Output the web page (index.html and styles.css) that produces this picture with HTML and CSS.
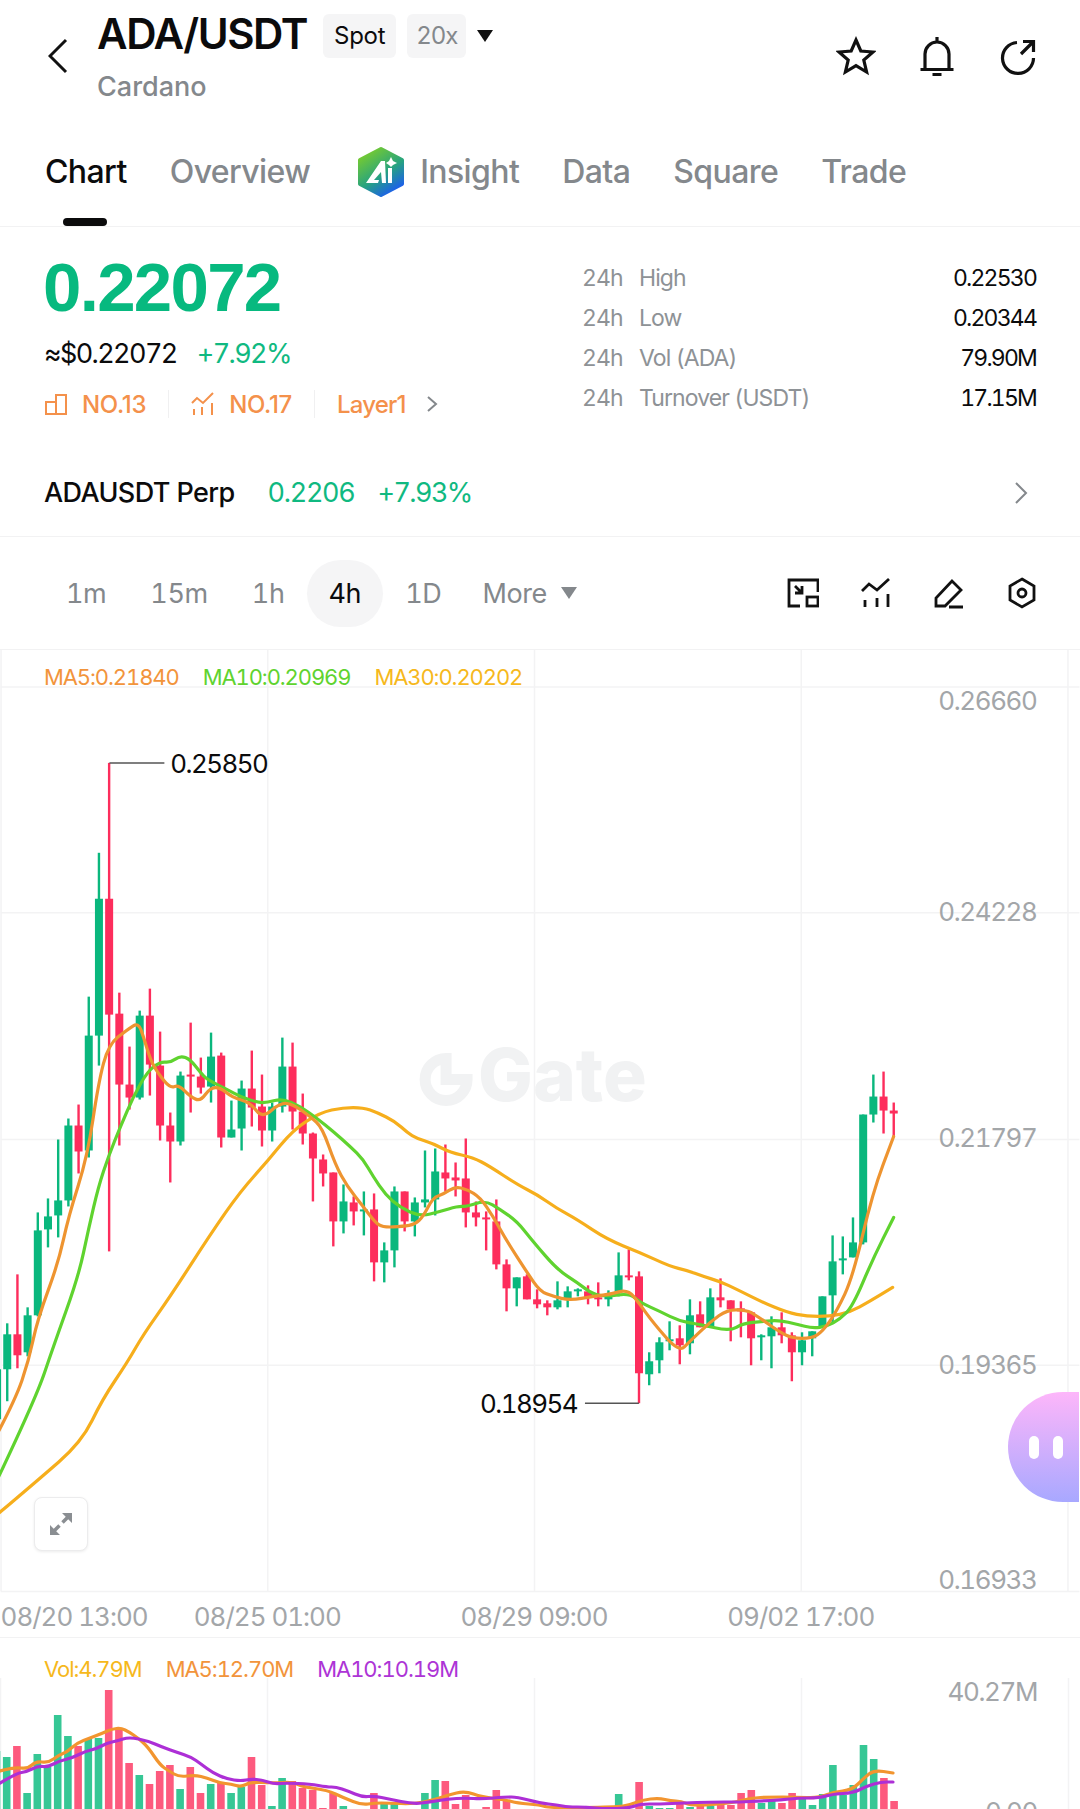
FILE: index.html
```html
<!DOCTYPE html>
<html>
	<head>
		<meta charset="UTF-8">
		<title>ADA/USDT</title>
		<link rel="stylesheet" href="styles.css">
	</head>
	<body>
		<div class="header">
			<svg class="back" viewBox="0 0 20 36"><path d="M18 2 L2 18 L18 34"/></svg>
			<div class="title-box">
				<div class="title-row">
					<h1 class="title">ADA/USDT</h1>
					<span class="badge">Spot</span>
					<span class="badge badge-gray">20x</span>
					<span class="tri"></span>
				</div>
				<div class="coin">Cardano</div>
			</div>
			<div class="head-icons">
				<svg class="icon" viewBox="0 0 40 40"><polygon points="20,4 24.8,15 37,16 27.8,24 30.6,36 20,29.6 9.4,36 12.2,24 3,16 15.2,15"/></svg>
				<svg class="icon" viewBox="0 0 40 40"><path d="M20 1 V5 M8 33 V18 A12 12 0 0 1 32 18 V33 M3.5 33.5 H36.5 M15.5 38.5 H24.5"/></svg>
				<svg class="icon" viewBox="0 0 40 40"><path d="M19 6.5 A15.5 15.5 0 1 0 35.5 22 M23 18 L34 7 M25 5.5 H35.5 V16"/></svg>
			</div>
		</div>

		<div class="tabs">
			<div class="tab active">Chart</div>
			<div class="tab">Overview</div>
			<div class="tab tab-ai">
				<svg class="ai-logo" viewBox="0 0 48 52">
					<defs>
						<linearGradient id="aiGrad" x1="0.15" y1="0.1" x2="0.7" y2="1">
							<stop offset="0" stop-color="#72c934"/>
							<stop offset="0.55" stop-color="#27a37f"/>
							<stop offset="1" stop-color="#1c5fec"/>
						</linearGradient>
					</defs>
					<polygon points="24,3 45,14 45,38 24,49 3,38 3,14" fill="url(#aiGrad)" stroke="url(#aiGrad)" stroke-width="4" stroke-linejoin="round"/>
					<polygon points="9,37 24,15 28,15 29,37 25,37 24,26 17,34 22,34 21,37" fill="#fff"/>
					<rect x="31" y="22" width="4" height="15" fill="#fff"/>
					<polygon points="34,11 36,15 40,17 36,19 34,21 32,19 29,17 32,15" fill="#fff"/>
				</svg>
				Insight
			</div>
			<div class="tab">Data</div>
			<div class="tab">Square</div>
			<div class="tab">Trade</div>
		</div>

		<div class="summary">
			<div class="quote">
				<div class="quote-left">
					<div class="price">0.22072</div>
					<div class="sub-row">
						<span>≈$0.22072</span>
						<span class="green">+7.92%</span>
					</div>
					<div class="tags">
						<svg class="tag-icon" viewBox="0 0 24 24"><path d="M2 10 H12 V22 H2 Z M12 3 H22 V22 H12 Z"/></svg>
						<span class="tag-text">NO.13</span>
						<span class="tag-line"></span>
						<svg class="tag-icon" viewBox="0 0 24 24"><path d="M1 11 L6 6 L12 11 L22 1 M3 17 V23 M11 15 V23 M21 11 V23"/></svg>
						<span class="tag-text">NO.17</span>
						<span class="tag-line"></span>
						<span class="tag-text tag-layer">Layer1</span>
						<svg class="tag-arrow" viewBox="0 0 12 18"><path d="M2 2 L10 9 L2 16"/></svg>
					</div>
				</div>
				<div class="stats">
					<div class="stat"><span class="stat-h">24h</span><span class="stat-name">High</span><span class="stat-val">0.22530</span></div>
					<div class="stat"><span class="stat-h">24h</span><span class="stat-name">Low</span><span class="stat-val">0.20344</span></div>
					<div class="stat"><span class="stat-h">24h</span><span class="stat-name">Vol (ADA)</span><span class="stat-val">79.90M</span></div>
					<div class="stat"><span class="stat-h">24h</span><span class="stat-name">Turnover (USDT)</span><span class="stat-val">17.15M</span></div>
				</div>
			</div>
			<div class="perp">
				<span class="perp-name">ADAUSDT Perp</span>
				<span class="green">0.2206</span>
				<span class="green perp-pct">+7.93%</span>
				<svg class="perp-arrow" viewBox="0 0 14 24"><path d="M2 2 L12 12 L2 22"/></svg>
			</div>
		</div>

		<div class="toolbar">
			<div class="times">
				<span class="time">1m</span>
				<span class="time">15m</span>
				<span class="time">1h</span>
				<span class="time on">4h</span>
				<span class="time">1D</span>
				<span class="time time-more">More</span>
				<span class="tri tri-gray"></span>
			</div>
			<div class="tools">
				<svg class="tool" viewBox="0 0 32 32"><path d="M13 29 H2 V3 H31 V15 M8 9 L15 16 M8 16 H15 V9"/><rect x="20" y="20" width="11" height="9"/></svg>
				<svg class="tool" viewBox="0 0 32 32"><path d="M2 14 L9 7 L17 13 L29 2 M5 23 V30 M17 21 V30 M28 17 V30"/></svg>
				<svg class="tool" viewBox="0 0 32 32"><path d="M3 29 V21 L19 4 L28 13 L12 29 Z M16 30 H30"/></svg>
				<svg class="tool" viewBox="0 0 32 32"><polygon points="16,2 28,9 28,23 16,30 4,23 4,9"/><circle cx="16" cy="16" r="4"/></svg>
			</div>
		</div>

		<div class="chart">
			<svg class="plot" viewBox="0 650 1080 988">
				<g id="grid"></g>
				<g class="mark">
					<path class="mark-ring" d="M446 1059 A21 21 0 1 0 467 1080 H446 Z"/>
					<text class="mark-text" x="478" y="1101">Gate</text>
				</g>
				<g id="candles"></g>
				<g id="lines"></g>
				<path class="tick" d="M109 763 H164"/>
				<path class="tick" d="M639 1404 H585"/>
				<text class="hl" x="170" y="773">0.25850</text>
				<text class="hl" x="480" y="1414">0.18954</text>
				<text class="axis" x="1037" y="710">0.26660</text>
				<text class="axis" x="1037" y="921">0.24228</text>
				<text class="axis" x="1037" y="1148">0.21797</text>
				<text class="axis" x="1037" y="1375">0.19365</text>
				<text class="axis" x="1037" y="1590">0.16933</text>
				<text class="date" x="0" y="1627">08/20 13:00</text>
				<text class="date mid" x="267" y="1627">08/25 01:00</text>
				<text class="date mid" x="534" y="1627">08/29 09:00</text>
				<text class="date mid" x="801" y="1627">09/02 17:00</text>
			</svg>
			<div class="legend">
				<span class="c-ma5">MA5:0.21840</span>
				<span class="c-ma10">MA10:0.20969</span>
				<span class="c-ma30">MA30:0.20202</span>
			</div>
			<div class="expand">
				<svg viewBox="0 0 28 28"><path d="M15 3 H25 V13 Z M3 15 V25 H13 Z"/><path class="expand-line" d="M21 7 L15.5 12.5 M7 21 L12.5 15.5"/></svg>
			</div>
		</div>

		<div class="volume">
			<svg class="plot" viewBox="0 1638 1080 171">
				<g id="volGrid"></g>
				<g id="bars"></g>
				<g id="volLines"></g>
				<text class="axis" x="1037" y="1701">40.27M</text>
				<text class="axis" x="1037" y="1821">0.00</text>
			</svg>
			<div class="legend legend-vol">
				<span class="c-ma30">Vol:4.79M</span>
				<span class="c-ma5">MA5:12.70M</span>
				<span class="c-vol10">MA10:10.19M</span>
			</div>
		</div>

		<div class="bot">
			<span class="eye"></span>
			<span class="eye"></span>
		</div>

		<script src="chart.js"></script>
	</body>
</html>
```
FILE: styles.css
```css
* {
	margin: 0;
	padding: 0;
	box-sizing: border-box;
}
html, body {
	width: 1080px;
	height: 1809px;
	overflow: hidden;
	background: #fff;
}
body {
	position: relative;
	font-family: Inter, "Liberation Sans", sans-serif;
	font-variant-numeric: tabular-nums;
	color: #0b0b0c;
}
svg {
	display: block;
	fill: none;
}
.green {
	color: #10b981;
}

/* header */
.header {
	display: flex;
	height: 120px;
	padding: 14px 42px 0 48px;
}
.back {
	width: 20px;
	height: 36px;
	margin: 24px 29px 0 0;
	stroke: #111;
	stroke-width: 3;
}
.title-box {
	flex: 1;
}
.title-row {
	display: flex;
	align-items: flex-start;
	height: 44px;
}
.title {
	font-size: 42px;
	line-height: 40px;
	font-weight: 600;
	letter-spacing: -1.4px;
	margin-right: 16px;
}
.badge {
	height: 44px;
	line-height: 44px;
	padding: 0 11px;
	margin-right: 11px;
	border-radius: 6px;
	background: #f5f5f6;
	font-size: 24px;
	letter-spacing: -0.3px;
}
.badge-gray {
	padding: 0 9px;
	color: #84888c;
	letter-spacing: -1px;
}
.tri {
	width: 0;
	height: 0;
	margin: 16px 0 0 0;
	border-left: 8px solid transparent;
	border-right: 8px solid transparent;
	border-top: 12px solid #111;
}
.coin {
	margin-top: 13px;
	font-size: 27px;
	line-height: 32px;
	font-weight: 500;
	color: #84888c;
}
.head-icons {
	display: flex;
	gap: 41px;
	margin-top: 22px;
}
.icon {
	width: 40px;
	height: 40px;
	stroke: #111;
	stroke-width: 3.2;
}

/* tabs */
.tabs {
	display: flex;
	gap: 43px;
	height: 107px;
	padding: 32px 0 0 45px;
	border-bottom: 1px solid #f2f2f3;
}
.tab {
	position: relative;
	height: 40px;
	line-height: 40px;
	font-size: 32px;
	font-weight: 500;
	letter-spacing: -0.6px;
	color: #84888c;
}
.tab.active {
	color: #0b0b0c;
}
.tab.active:after {
	content: "";
	position: absolute;
	left: 18px;
	top: 66px;
	width: 44px;
	height: 8px;
	border-radius: 4px;
	background: #0b0b0c;
}
.tab-ai {
	display: flex;
	align-items: center;
	gap: 15px;
	margin-left: 4px;
}
.ai-logo {
	width: 48px;
	height: 52px;
}

/* price summary */
.quote {
	display: flex;
	justify-content: space-between;
	height: 222px;
	padding: 25px 44px 0 44px;
}
.price {
	margin-left: -1px;
	font-family: "Liberation Sans", sans-serif;
	font-size: 69px;
	line-height: 72px;
	font-weight: 700;
	letter-spacing: -1.7px;
	color: #07b97f;
}
.sub-row {
	display: flex;
	gap: 20px;
	margin-top: 13px;
	font-size: 27px;
	line-height: 34px;
	letter-spacing: -1.6px;
}
.tags {
	display: flex;
	align-items: center;
	height: 34px;
	margin-top: 16px;
	color: #f4914b;
	font-size: 24px;
	font-weight: 500;
	font-variant-numeric: normal;
	letter-spacing: -0.3px;
}
.tag-layer {
	letter-spacing: -0.8px;
}
.tag-icon {
	width: 24px;
	height: 24px;
	margin-right: 14px;
	stroke: #f4914b;
	stroke-width: 2;
}
.tag-line {
	width: 1px;
	height: 28px;
	margin: 0 22px;
	background: #f0f0f1;
}
.tag-arrow {
	width: 12px;
	height: 18px;
	margin-left: 20px;
	stroke: #84888c;
	stroke-width: 2;
}
.stats {
	width: 454px;
	margin-top: 6px;
}
.stat {
	display: flex;
	height: 40px;
	line-height: 40px;
	font-size: 23px;
	letter-spacing: -0.9px;
	color: #8e9296;
}
.stat-h {
	width: 57px;
}
.stat-val {
	margin-left: auto;
	letter-spacing: -1.8px;
	color: #0b0b0c;
}
.perp {
	display: flex;
	align-items: center;
	gap: 23px;
	height: 88px;
	padding: 0 52px 0 44px;
	border-bottom: 1px solid #f2f2f3;
	font-size: 27px;
	letter-spacing: -1.3px;
}
.perp-name {
	margin-right: 10px;
	font-weight: 500;
	letter-spacing: -0.6px;
}
.perp-pct {
	letter-spacing: -1.6px;
}
.perp-arrow {
	width: 14px;
	height: 24px;
	margin-left: auto;
	stroke: #84888c;
	stroke-width: 2;
}

/* period bar */
.toolbar {
	display: flex;
	align-items: center;
	justify-content: space-between;
	height: 113px;
	padding: 0 42px 0 44px;
	border-bottom: 1px solid #f2f2f3;
}
.times {
	display: flex;
	align-items: center;
}
.time {
	height: 67px;
	line-height: 67px;
	padding: 0 22px;
	font-size: 27px;
	letter-spacing: -0.4px;
	color: #84888c;
}
.time.on {
	color: #0b0b0c;
	background: #f5f5f6;
	border-radius: 34px;
}
.time-more {
	margin-left: -3px;
}
.tri-gray {
	margin: 0 0 0 -8px;
	border-top-color: #84888c;
}
.tools {
	display: flex;
	gap: 41px;
}
.tool {
	width: 32px;
	height: 32px;
	stroke: #111;
	stroke-width: 2.8;
}

/* charts */
.chart {
	position: relative;
	height: 988px;
	border-bottom: 1px solid #f2f2f3;
}
.volume {
	position: relative;
	height: 171px;
}
.plot {
	position: absolute;
	left: 0;
	top: 0;
	width: 1080px;
	height: 100%;
}
.legend {
	position: relative;
	display: flex;
	gap: 24px;
	padding: 12px 0 0 44px;
	font-size: 22px;
	line-height: 30px;
	letter-spacing: -1.1px;
}
.legend-vol {
	padding-top: 16px;
	letter-spacing: -1.05px;
}
.c-ma5 {
	color: #f2943b;
}
.c-ma10 {
	color: #5fd32f;
}
.c-ma30 {
	color: #f6b81c;
}
.c-vol10 {
	color: #ad34d6;
}
.axis {
	fill: #a3a6a9;
	font-size: 26px;
	letter-spacing: -1.4px;
	text-anchor: end;
}
.date {
	fill: #a3a6a9;
	font-size: 26px;
	letter-spacing: -1px;
}
.date.mid {
	text-anchor: middle;
}
.hl {
	fill: #0b0b0c;
	font-size: 26px;
	letter-spacing: -1.6px;
}
.tick {
	stroke: #555;
	stroke-width: 1.5;
}
.mark-ring {
	stroke: #f1f2f3;
	stroke-width: 11;
}
.mark-text {
	fill: #f1f2f3;
	font-size: 73px;
	font-weight: 800;
}
.expand {
	position: absolute;
	left: 34px;
	top: 847px;
	display: flex;
	align-items: center;
	justify-content: center;
	width: 54px;
	height: 54px;
	background: #fff;
	border: 1px solid #ececed;
	border-radius: 8px;
	box-shadow: 0 1px 3px rgba(0, 0, 0, 0.08);
}
.expand svg {
	width: 28px;
	height: 28px;
	fill: #8a8e92;
}
.expand-line {
	stroke: #8a8e92;
	stroke-width: 3.5;
}

/* floating helper */
.bot {
	position: absolute;
	right: 1px;
	top: 1392px;
	display: flex;
	gap: 14px;
	align-items: center;
	width: 71px;
	height: 110px;
	padding-left: 21px;
	border-radius: 55px 0 0 55px;
	background: linear-gradient(#fdb6fa, #a8a8ff);
}
.eye {
	width: 10px;
	height: 23px;
	border-radius: 5px;
	background: #fff;
}
```
FILE: chart.js
```js
var NS = "http://www.w3.org/2000/svg";
var GREEN = "#0ab77d";
var RED = "#fd2d5c";

// wick top, body top, body bottom, wick bottom, colour. one row per 4h bar
var candles = [
	[1370,1370,1420,1402,"g"],
	[1324,1335,1370,1402,"g"], [1275,1335,1356,1369,"r"], [1308,1316,1353,1357,"g"], [1213,1231,1316,1317,"g"],
	[1199,1217,1230,1248,"g"], [1140,1201,1216,1238,"g"], [1119,1126,1201,1207,"g"], [1105,1126,1152,1174,"r"],
	[997,1036,1151,1158,"g"], [853,899,1036,1066,"g"], [763,899,1015,1252,"r"], [993,1014,1085,1146,"r"],
	[1047,1085,1098,1110,"r"], [1011,1016,1098,1100,"g"], [989,1016,1065,1096,"r"], [1032,1066,1126,1141,"r"],
	[1113,1126,1142,1183,"r"], [1072,1076,1142,1146,"g"], [1023,1075,1077,1113,"r"], [1058,1077,1088,1094,"r"],
	[1033,1057,1087,1103,"g"], [1053,1056,1138,1148,"r"], [1101,1130,1138,1138,"g"], [1081,1089,1129,1151,"g"],
	[1051,1089,1108,1127,"r"], [1075,1107,1131,1147,"r"], [1103,1107,1131,1142,"g"], [1038,1067,1107,1113,"g"],
	[1043,1067,1112,1130,"r"], [1094,1112,1134,1145,"r"], [1133,1134,1159,1202,"r"], [1155,1160,1174,1187,"r"],
	[1173,1173,1222,1247,"r"], [1185,1202,1222,1234,"g"], [1197,1203,1212,1226,"r"], [1192,1210,1211,1236,"g"],
	[1194,1210,1263,1282,"r"], [1243,1251,1263,1283,"g"], [1187,1192,1251,1268,"g"], [1192,1192,1222,1232,"r"],
	[1198,1203,1222,1237,"g"], [1151,1200,1203,1208,"g"], [1149,1172,1200,1216,"g"], [1145,1173,1179,1192,"r"],
	[1163,1178,1181,1197,"r"], [1139,1179,1213,1228,"r"], [1202,1213,1218,1227,"r"], [1212,1218,1220,1251,"r"],
	[1200,1222,1265,1270,"r"], [1260,1265,1289,1312,"r"], [1278,1278,1289,1307,"g"], [1275,1277,1300,1300,"r"],
	[1290,1300,1305,1309,"r"], [1301,1304,1308,1316,"r"], [1282,1301,1308,1310,"g"], [1287,1292,1299,1308,"g"],
	[1289,1290,1291,1297,"g"], [1286,1292,1298,1305,"r"], [1283,1298,1300,1307,"r"], [1291,1297,1300,1307,"g"],
	[1253,1276,1293,1297,"g"], [1250,1276,1278,1281,"r"], [1272,1277,1374,1404,"r"], [1353,1362,1375,1386,"g"],
	[1338,1343,1361,1374,"g"], [1322,1340,1342,1351,"g"], [1326,1339,1346,1365,"r"], [1300,1316,1344,1355,"g"],
	[1302,1315,1328,1328,"r"], [1289,1298,1328,1328,"g"], [1279,1298,1301,1308,"r"], [1301,1301,1310,1342,"r"],
	[1302,1309,1312,1338,"r"], [1312,1313,1339,1366,"r"], [1335,1336,1337,1361,"g"], [1317,1328,1337,1369,"g"],
	[1313,1328,1336,1344,"r"], [1333,1336,1353,1382,"r"], [1333,1341,1353,1366,"g"], [1332,1332,1339,1357,"g"],
	[1297,1297,1328,1328,"g"], [1236,1262,1296,1323,"g"], [1237,1259,1261,1275,"g"], [1218,1243,1258,1258,"g"],
	[1115,1115,1243,1245,"g"], [1075,1097,1115,1123,"g"], [1072,1097,1111,1134,"r"], [1103,1111,1114,1137,"r"]
];

var ma5 = [[-4,1436],[15,1400],[28,1362],[37,1320],[58,1263],[68,1217],[87,1157],[98,1083],[108,1045],[127,1030],[138,1023],[143,1037],[150,1060],[157,1073],[170,1089],[178,1085],[190,1097],[200,1102],[210,1088],[220,1088],[232,1098],[250,1103],[262,1119],[280,1103],[293,1105],[310,1117],[322,1128],[335,1165],[347,1187],[363,1207],[375,1223],[383,1228],[403,1227],[415,1225],[423,1217],[433,1198],[443,1195],[455,1187],[467,1190],[480,1198],[493,1217],[507,1242],[527,1273],[540,1292],[553,1297],[570,1301],[593,1297],[610,1295],[628,1290],[640,1305],[653,1323],[679,1353],[690,1342],[710,1323],[728,1310],[747,1311],[755,1315],[780,1333],[793,1339],[812,1339],[823,1332],[837,1312],[853,1278],[873,1193],[894,1137]];
var ma10 = [[-4,1482],[35,1400],[53,1347],[78,1277],[88,1230],[98,1187],[108,1157],[120,1127],[133,1097],[147,1072],[160,1062],[170,1063],[180,1056],[190,1060],[200,1073],[207,1080],[227,1090],[240,1097],[257,1103],[267,1103],[282,1099],[300,1107],[317,1119],[333,1132],[350,1147],[363,1160],[373,1177],[385,1195],[400,1208],[420,1217],[440,1212],[457,1207],[467,1207],[485,1201],[500,1210],[517,1222],[533,1242],[557,1270],[577,1283],[593,1295],[607,1297],[630,1294],[640,1303],[660,1312],[680,1322],[700,1325],[730,1332],[743,1324],[763,1322],[780,1321],[797,1325],[813,1329],[827,1327],[840,1320],[853,1307],[873,1260],[894,1218]];
var ma30 = [[-4,1516],[35,1483],[81,1443],[102,1400],[127,1363],[143,1335],[170,1297],[210,1235],[240,1192],[267,1162],[293,1130],[320,1113],[343,1108],[363,1108],[377,1113],[395,1122],[407,1133],[417,1139],[433,1144],[450,1153],[473,1158],[490,1167],[517,1185],[537,1195],[557,1209],[577,1220],[607,1240],[640,1253],[670,1267],[687,1271],[703,1277],[720,1282],[737,1290],[763,1303],[787,1313],[807,1317],[830,1317],[850,1313],[870,1302],[893,1288]];

// index of the candle above, top of the bar
var vols = [[-1,1751,"g"],[0,1757,"g"],[1,1746,"r"],[2,1793,"g"],[3,1754,"g"],[4,1767,"g"],[5,1715,"g"],[6,1736,"g"],[7,1746,"r"],[8,1739,"g"],[9,1738,"g"],[10,1690,"r"],[11,1730,"r"],[12,1763,"r"],[13,1775,"g"],[14,1784,"r"],[15,1771,"r"],[16,1765,"r"],[17,1789,"g"],[18,1767,"r"],[19,1793,"r"],[20,1784,"g"],[21,1783,"r"],[22,1793,"g"],[23,1787,"g"],[24,1757,"r"],[25,1785,"r"],[26,1806,"g"],[27,1778,"g"],[28,1781,"r"],[29,1788,"r"],[30,1790,"r"],[31,1808,"r"],[32,1793,"r"],[33,1806,"g"],[36,1793,"r"],[37,1803,"g"],[38,1803,"g"],[41,1793,"g"],[42,1780,"g"],[43,1781,"r"],[44,1804,"r"],[45,1795,"r"],[47,1807,"r"],[48,1790,"r"],[49,1800,"r"],[54,1807,"g"],[60,1794,"g"],[62,1782,"r"],[63,1806,"g"],[64,1808,"g"],[65,1808,"g"],[66,1803,"r"],[67,1807,"g"],[68,1806,"r"],[69,1806,"g"],[70,1805,"r"],[71,1805,"r"],[72,1793,"r"],[73,1790,"r"],[74,1803,"g"],[75,1801,"g"],[76,1803,"r"],[77,1793,"r"],[78,1798,"g"],[79,1805,"g"],[80,1794,"g"],[81,1765,"g"],[82,1795,"g"],[83,1785,"g"],[84,1745,"g"],[85,1759,"g"],[86,1778,"r"],[87,1801,"r"]];

var volMa5 = [[0,1771],[14,1767],[28,1769],[36,1761],[48,1763],[59,1755],[67,1752],[77,1743],[90,1738],[103,1733],[112,1729],[121,1728],[129,1732],[138,1738],[148,1747],[160,1765],[169,1771],[179,1777],[195,1775],[207,1778],[220,1783],[231,1784],[241,1787],[251,1782],[272,1783],[293,1782],[303,1787],[327,1790],[344,1798],[362,1805],[374,1803],[389,1803],[413,1804],[434,1800],[448,1795],[465,1791],[482,1797],[506,1800],[517,1803],[540,1805],[550,1808],[616,1807],[630,1805],[642,1800],[659,1798],[671,1801],[681,1801],[692,1806],[733,1803],[750,1798],[771,1797],[795,1797],[819,1798],[833,1792],[852,1790],[864,1778],[874,1770],[893,1773]];
var volMa10 = [[0,1783],[17,1773],[26,1772],[38,1766],[48,1767],[59,1761],[72,1758],[86,1751],[96,1749],[107,1743],[117,1741],[129,1737],[148,1741],[162,1747],[176,1752],[191,1757],[201,1764],[213,1773],[227,1779],[241,1781],[251,1779],[262,1780],[274,1784],[286,1783],[310,1784],[327,1787],[336,1787],[348,1791],[362,1797],[374,1796],[389,1799],[413,1804],[430,1802],[448,1799],[465,1798],[482,1799],[506,1797],[517,1797],[540,1803],[557,1805],[568,1807],[586,1807],[605,1809],[630,1808],[640,1804],[659,1804],[685,1803],[709,1802],[740,1802],[760,1801],[781,1800],[798,1798],[819,1798],[833,1794],[853,1793],[867,1786],[881,1782],[893,1782]];

function add(parent, tag, attrs) {
	var el = document.createElementNS(NS, tag);
	for (var k in attrs) {
		el.setAttribute(k, attrs[k]);
	}
	parent.appendChild(el);
	return el;
}

function barX(i) {
	return 6.7 + 10.2 * i;
}

// midpoint smoothing so the averages don't look like polylines
function smooth(points) {
	var d = "M" + points[0][0] + " " + points[0][1];
	for (var i = 1; i < points.length - 1; i++) {
		var mx = (points[i][0] + points[i + 1][0]) / 2;
		var my = (points[i][1] + points[i + 1][1]) / 2;
		d += " Q" + points[i][0] + " " + points[i][1] + " " + mx + " " + my;
	}
	var last = points[points.length - 1];
	return d + " L" + last[0] + " " + last[1];
}

function drawLine(parent, points, colour, width) {
	add(parent, "path", {
		d: smooth(points),
		stroke: colour,
		"stroke-width": width,
		"stroke-linejoin": "round",
		"stroke-linecap": "round",
		fill: "none"
	});
}

function drawGrid(parent, rows, top, bottom) {
	var i;
	for (i = 0; i < rows.length; i++) {
		add(parent, "path", { d: "M0 " + rows[i] + " H1080", stroke: "#f3f3f4", "stroke-width": 1.5 });
	}
	for (i = 0; i < 5; i++) {
		add(parent, "path", { d: "M" + (267 * i + 0.5) + " " + top + " V" + bottom, stroke: "#f3f3f4", "stroke-width": 1.5 });
	}
}

drawGrid(document.getElementById("grid"), [687, 913, 1140, 1366], 650, 1592);
add(document.getElementById("grid"), "path", { d: "M0 1592.5 H1080", stroke: "#f3f3f4", "stroke-width": 1.5 });
drawGrid(document.getElementById("volGrid"), [], 1678, 1809);

var candleBox = document.getElementById("candles");
for (var i = 0; i < candles.length; i++) {
	var c = candles[i];
	var x = barX(i - 1);
	var colour = c[4] == "g" ? GREEN : RED;
	add(candleBox, "rect", { x: x - 1.2, y: c[0], width: 2.4, height: c[3] - c[0], fill: colour });
	add(candleBox, "rect", { x: x - 4, y: c[1], width: 8, height: Math.max(c[2] - c[1], 2), fill: colour });
}

var lineBox = document.getElementById("lines");
drawLine(lineBox, ma30, "#f6ae1c", 3.2);
drawLine(lineBox, ma10, "#5fd32f", 3.2);
drawLine(lineBox, ma5, "#ee9430", 3.2);

var barBox = document.getElementById("bars");
for (var j = 0; j < vols.length; j++) {
	add(barBox, "rect", {
		x: barX(vols[j][0]) - 3.8,
		y: vols[j][1],
		width: 7.6,
		height: 1809 - vols[j][1],
		fill: vols[j][2] == "g" ? "#36c795" : "#fd5a7e"
	});
}

var volLineBox = document.getElementById("volLines");
drawLine(volLineBox, volMa5, "#f2952f", 3.2);
drawLine(volLineBox, volMa10, "#ad2fd6", 3.2);
```
